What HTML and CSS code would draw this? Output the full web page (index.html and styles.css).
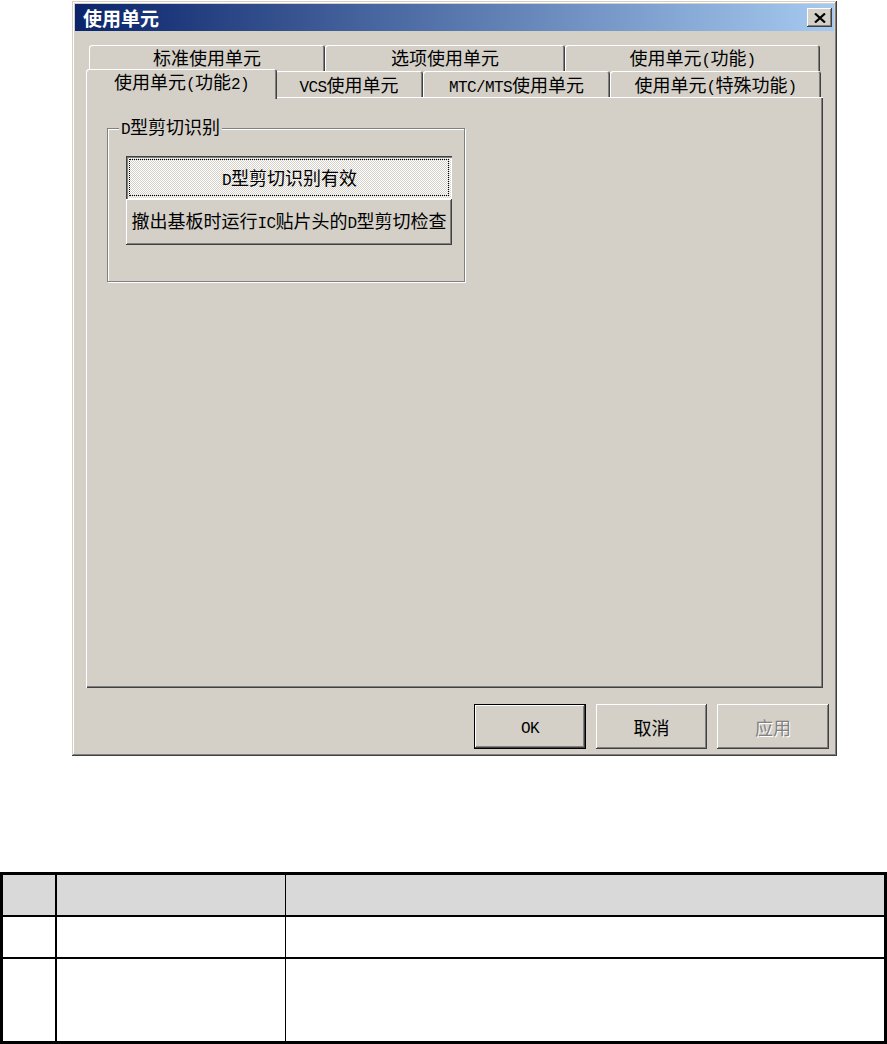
FILE: index.html
```html
<!DOCTYPE html>
<html lang="zh-CN">
<head>
    <meta charset="UTF-8">
    <title>使用单元</title>
    <link rel="stylesheet" href="styles.css">
</head>
<body>
    <div class="dialog">
        <div class="titlebar">
            <span class="title">使用单元</span>
            <button class="close" aria-label="关闭">
                <svg width="12" height="10" viewBox="0 0 12 10">
                    <path d="M1 0.5 L11 9.5 M11 0.5 L1 9.5" stroke="#000" stroke-width="2.2" fill="none"/>
                </svg>
            </button>
        </div>
        <div class="content">
            <div class="tabs">
                <div class="tab-row back">
                    <div class="tab">标准使用单元</div>
                    <div class="tab">选项使用单元</div>
                    <div class="tab">使用单元<span class="lat">(</span>功能<span class="lat">)</span></div>
                </div>
                <div class="tab-row front">
                    <div class="tab selected">使用单元<span class="lat">(</span>功能<span class="lat">2)</span></div>
                    <div class="tab"><span class="lat">VCS</span>使用单元</div>
                    <div class="tab"><span class="lat">MTC/MTS</span>使用单元</div>
                    <div class="tab">使用单元<span class="lat">(</span>特殊功能<span class="lat">)</span></div>
                </div>
            </div>
            <div class="panel">
                <fieldset class="group">
                    <legend><span class="lat">D</span>型剪切识别</legend>
                    <button class="btn toggle pressed"><span class="focus"><span class="lat">D</span>型剪切识别有效</span></button>
                    <button class="btn toggle">撤出基板时运行<span class="lat">IC</span>贴片头的<span class="lat">D</span>型剪切检查</button>
                </fieldset>
            </div>
            <div class="actions">
                <button class="btn action default"><span class="lat">OK</span></button>
                <button class="btn action cancel">取消</button>
                <button class="btn action" disabled>应用</button>
            </div>
        </div>
    </div>

    <table class="spec">
        <colgroup>
            <col class="c-no">
            <col class="c-name">
            <col class="c-desc">
        </colgroup>
        <tr class="head"><th></th><th></th><th></th></tr>
        <tr class="row-short"><td></td><td></td><td></td></tr>
        <tr class="row-tall"><td></td><td></td><td></td></tr>
    </table>
</body>
</html>
```

FILE: styles.css
```css
:root {
    --face: #d4d0c8;
    --shadow: #808080;
    --dark: #404040;
    --light: #ffffff;
}

body {
    margin: 0;
    background: #fff;
    color: #000;
    font-family: "Noto Sans CJK SC", sans-serif;
    font-size: 18px;
    line-height: 18px;
}

/* half-width latin like the bitmap system font */
.lat {
    font-family: "Liberation Mono", monospace;
    font-size: 16px;
    letter-spacing: -0.6px;
}

/* window frame */

.dialog {
    box-sizing: border-box;
    width: 765px;
    height: 755px;
    margin: 1px 0 0 72px;
    padding: 3px;
    background: var(--face);
    box-shadow:
        inset -1px -1px 0 var(--dark),
        inset 1px 1px 0 var(--face),
        inset -2px -2px 0 var(--shadow),
        inset 2px 2px 0 var(--light);
    display: flex;
    flex-direction: column;
}

.titlebar {
    height: 27px;
    display: flex;
    align-items: center;
    justify-content: space-between;
    padding: 0 2px 0 8px;
    background: linear-gradient(to right, #0a246a, #a6caf0);
}

.title {
    color: #fff;
    font-weight: bold;
    font-size: 19px;
}

.close {
    width: 25px;
    height: 19px;
    padding: 0;
    border: 0;
    background: var(--face);
    display: flex;
    align-items: center;
    justify-content: center;
    box-shadow:
        inset -1px -1px 0 var(--dark),
        inset 1px 1px 0 var(--light),
        inset -2px -2px 0 var(--shadow);
}

.content {
    flex: 1;
    display: flex;
    flex-direction: column;
    padding: 14px 0 0;
}

/* tabs */

.tabs {
    margin: 0 11px;
}

.tab-row {
    display: flex;
    height: 26px;
}

.tab-row.back {
    margin: 0 3px;
}

.tab-row.front {
    margin: 0 2px;
}

.tab {
    box-sizing: border-box;
    flex: none;
    text-align: center;
    line-height: 26px;
    border-radius: 3px 3px 0 0;
    background: var(--face);
    white-space: nowrap;
    box-shadow:
        inset 1px 1px 0 var(--light),
        inset -1px 0 0 var(--dark),
        inset -2px 0 0 var(--shadow);
}

.back .tab {
    line-height: 24px;
}

.back .tab:nth-child(1) { width: 236px; }
.back .tab:nth-child(2) { width: 240px; }
.back .tab:nth-child(3) { width: 255px; }

.front .tab:nth-child(1) { width: 187px; }
.front .tab:nth-child(2) { width: 148px; }
.front .tab:nth-child(3) { width: 187px; }
.front .tab:nth-child(4) { width: 211px; }

.tab.selected {
    position: relative;
    z-index: 1;
    height: 30px;
    margin: -2px -2px -2px -2px;
    width: 191px !important;
    line-height: 24px;
}

.panel {
    box-sizing: border-box;
    height: 591px;
    margin: 0 11px;
    padding: 20px 0 0 21px;
    box-shadow:
        inset 1px 1px 0 var(--light),
        inset -1px -1px 0 var(--dark),
        inset -2px -2px 0 var(--shadow);
}

/* group box */

.group {
    box-sizing: border-box;
    width: 358px;
    height: 165px;
    margin: 0;
    padding: 17px 0 0 18px;
    border: 1px solid var(--shadow);
    box-shadow:
        1px 1px 0 var(--light),
        inset 1px 1px 0 var(--light);
}

.group legend {
    margin-left: -7px;
    padding: 0 2px;
    background: var(--face);
    line-height: 18px;
}

/* buttons */

.btn {
    box-sizing: border-box;
    display: block;
    padding: 0;
    border: 0;
    font: inherit;
    color: #000;
    text-align: center;
    white-space: nowrap;
    background: var(--face);
    box-shadow:
        inset -1px -1px 0 var(--dark),
        inset 1px 1px 0 var(--light),
        inset -2px -2px 0 var(--shadow);
}

.toggle {
    width: 326px;
    height: 46px;
}

.toggle.pressed {
    height: 43px;
    padding: 3px;
    background: repeating-conic-gradient(#fff 0 25%, var(--face) 0 50%) 0 0 / 2px 2px;
    box-shadow:
        inset 1px 1px 0 var(--dark),
        inset 2px 2px 0 var(--shadow),
        inset -1px -1px 0 var(--light);
}

.focus {
    box-sizing: border-box;
    display: block;
    height: 37px;
    line-height: 35px;
    padding-left: 1px;
    border: 1px dotted #000;
}

.actions {
    display: flex;
    justify-content: flex-end;
    gap: 10px;
    padding: 16px 5px 0 0;
}

.action {
    width: 112px;
    height: 45px;
}

.action.cancel {
    width: 111px;
}

.action.default {
    box-shadow:
        inset 0 0 0 1px #000,
        inset -2px -2px 0 var(--dark),
        inset 2px 2px 0 var(--light),
        inset -3px -3px 0 var(--shadow);
}

.action:disabled {
    color: var(--shadow);
    text-shadow: 1px 1px 0 var(--light);
}

/* spec table below the screenshot */

.spec {
    margin-top: 116px;
    width: 887px;
    table-layout: fixed;
    border-collapse: separate;
    border-spacing: 0;
    border: 3px solid #000;
}

.c-no { width: 54px; }
.c-name { width: 229px; }
.c-desc { width: 598px; }

.spec th,
.spec td {
    padding: 0;
    border-bottom: 2px solid #000;
}

.spec th:nth-child(1),
.spec td:nth-child(1) {
    border-right: 2px solid #000;
}

.spec th:nth-child(2),
.spec td:nth-child(2) {
    border-right: 1px solid #000;
}

.spec th {
    background: #d9d9d9;
}

.spec .head,
.spec .row-short {
    height: 42px;
}

.spec .row-tall {
    height: 82px;
}

.spec .row-tall td {
    border-bottom: 0;
}
```
